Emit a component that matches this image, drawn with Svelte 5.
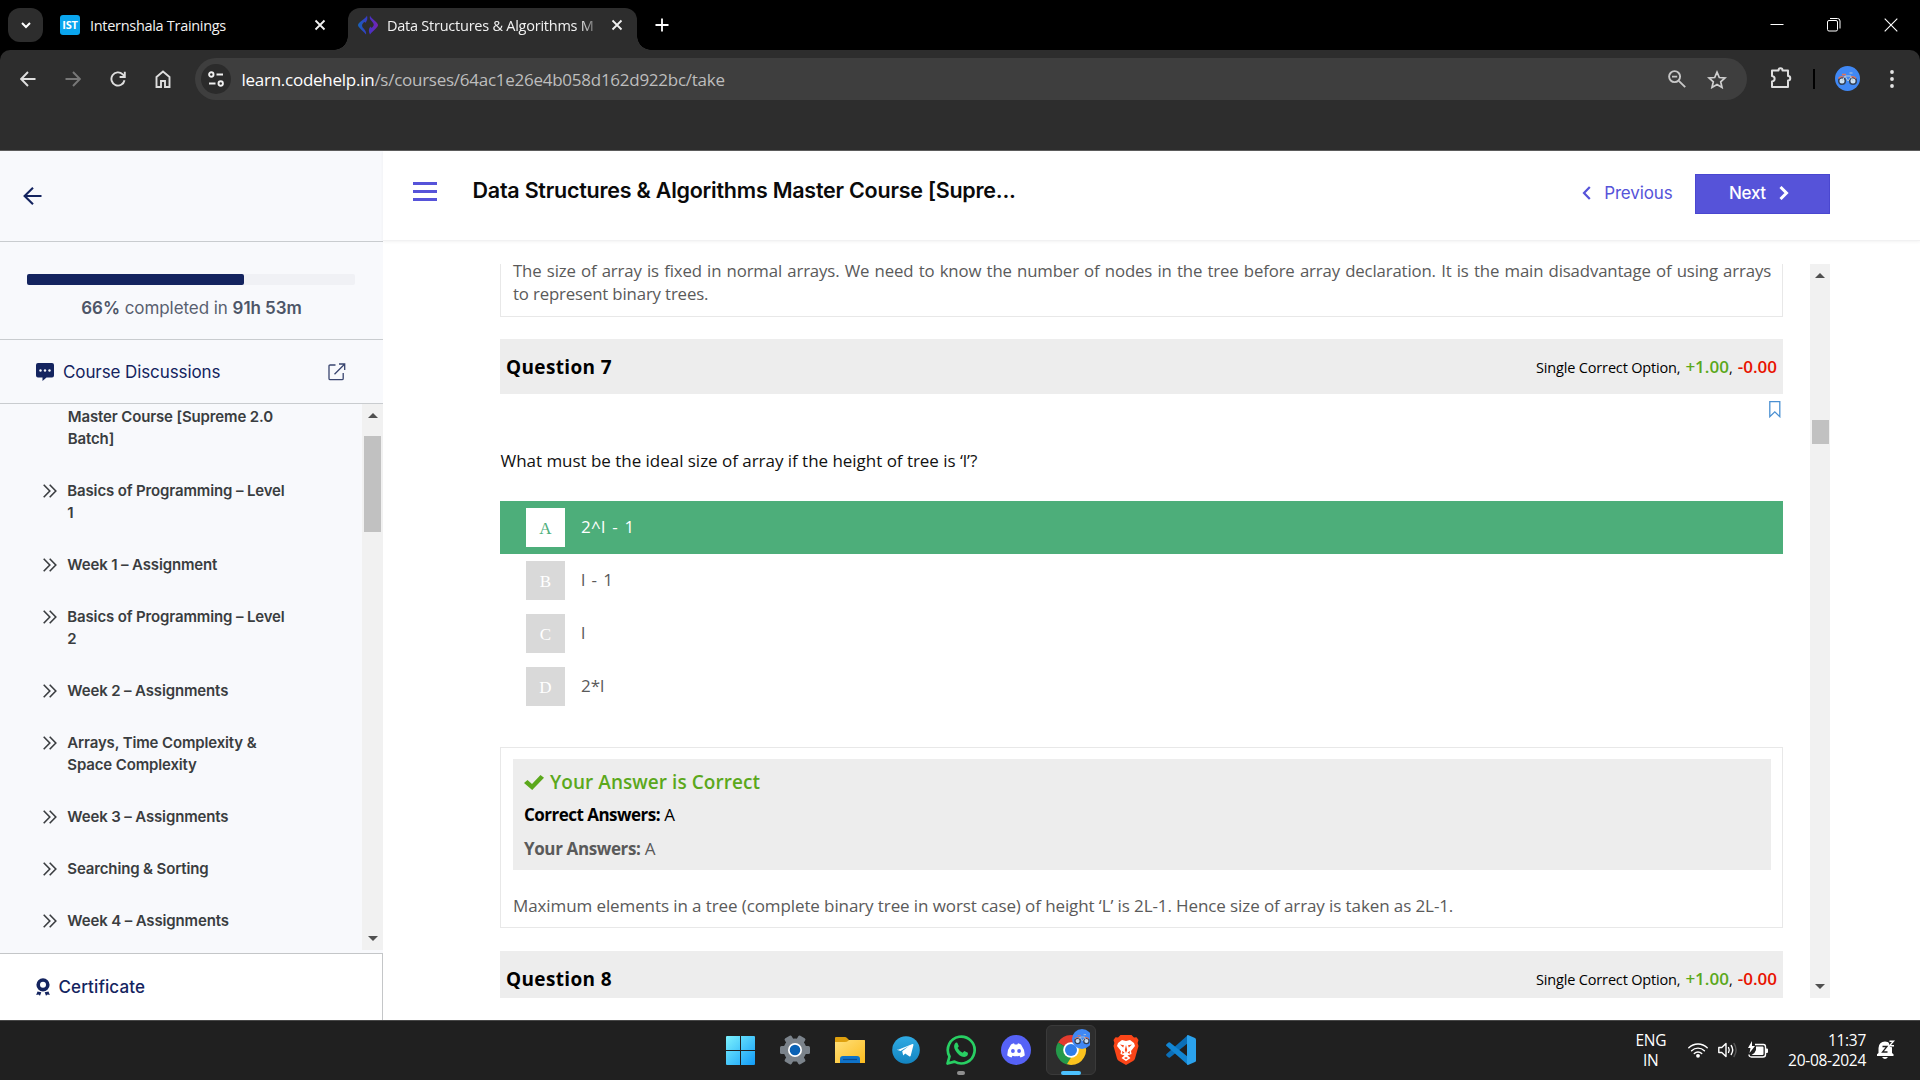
<script>
  const lessons = [
    { title: 'Basics of Programming – Level 1' },
    { title: 'Week 1 – Assignment' },
    { title: 'Basics of Programming – Level 2' },
    { title: 'Week 2 – Assignments' },
    { title: 'Arrays, Time Complexity & Space Complexity' },
    { title: 'Week 3 – Assignments' },
    { title: 'Searching & Sorting' },
    { title: 'Week 4 – Assignments' }
  ];
  const options = [
    { key: 'A', text: '2^l - 1', correct: true },
    { key: 'B', text: 'l - 1' },
    { key: 'C', text: 'l' },
    { key: 'D', text: '2*l' }
  ];
  const progress = 66;
</script>

{#snippet bike()}
  <circle cx="12.5" cy="12.5" r="12.5" fill="#4088f4" />
  <g fill="#cfe3f5" stroke="#33435c" stroke-width="1.6">
    <circle cx="7" cy="15" r="3.300" />
    <circle cx="18" cy="15" r="3.300" />
  </g>
  <path d="M7 15l3-5h6l2 5M10 10l3 5 3.300-4.500M14.500 7h3" fill="none" stroke="#b9c9d8" stroke-width="1" />
  <path d="M7 8.500h4M3.500 12.500q2-2.500 5-1.500M16 11q3-1 5 1.500" fill="none" stroke="#e2745a" stroke-width="1.300" />
{/snippet}

{#snippet questionBar(n)}
  <div class="qbar">
    <h3>Question {n}</h3>
    <p class="marks"><span class="kind">Single Correct Option,</span><b class="plus">+1.00</b><span class="comma">,</span><b class="minus">-0.00</b></p>
  </div>
{/snippet}

<div class="screen">
  <div class="tabs">
    <div class="tabsearch">
      <svg width="12" height="12" viewBox="0 0 12 12"><path d="M2 4l4 4 4-4" fill="none" stroke="#fff" stroke-width="2" /></svg>
    </div>
    <div class="tab">
      <span class="ist">IST</span>
      <span class="tabtitle first">Internshala Trainings</span>
      <svg class="x" width="12" height="12" viewBox="0 0 12 12"><path d="M1.500 1.500l9 9M10.500 1.500l-9 9" stroke="#f1f1f1" stroke-width="1.8" /></svg>
    </div>
    <div class="tab active">
      <svg width="20" height="20" viewBox="0 0 20 20">
        <defs><linearGradient id="ch" x1="0" x2="1"><stop offset="0" stop-color="#1764b8" /><stop offset="0.500" stop-color="#3a35c9" /><stop offset="1" stop-color="#7a22b5" /></linearGradient></defs>
        <path d="M9 .5C8.500 3 0 7.500 0 10s5 5.500 8 9.500c.6-2-.6-4-2.400-6C3.800 11.500 3.500 10 5 8.200 6.300 6.600 7 6.500 7.300 8 9.300 6 9.800 3 9 .5zM12 .5c.5 2.500 8 7 8 9.500s-5 5.500-8 9.500c-1.600-3-1.500-6 .5-8 .4 1.500 1.200 1.800 2.500 0 1.500-1.800.5-3.500-1-5C12 4.500 11.300 3 12 .5z" fill="url(#ch)" />
      </svg>
      <span class="tabtitle second">Data Structures &amp; Algorithms M</span>
      <svg class="x" width="12" height="12" viewBox="0 0 12 12"><path d="M1.500 1.500l9 9M10.500 1.500l-9 9" stroke="#f1f1f1" stroke-width="1.8" /></svg>
    </div>
    <svg class="plusicon" width="14" height="14" viewBox="0 0 14 14"><path d="M7 .5v13M.5 7h13" stroke="#fff" stroke-width="1.800" /></svg>
    <div class="winctl">
      <svg width="14" height="14" viewBox="0 0 14 14"><path d="M.5 6.500h13" stroke="#fff" /></svg>
      <svg width="14" height="14" viewBox="0 0 14 14"><g fill="none" stroke="#fff"><rect x=".5" y="2.500" width="10" height="10.500" rx="1.500" /><path d="M3 .5h7.500a2.500 2.500 0 0 1 2.500 2.500v7.500" /></g></svg>
      <svg width="14" height="14" viewBox="0 0 14 14"><path d="M.7.7l12.600 12.600M13.300.7L.7 13.300" stroke="#fff" stroke-width="1.100" /></svg>
    </div>
  </div>

  <div class="toolbarback">
    <div class="toolbar">
      <div class="nav">
        <svg width="16" height="16" viewBox="0 0 16 16"><path d="M15.500 8H1.500M8 1L1.200 8 8 15" fill="none" stroke="#dedede" stroke-width="1.900" /></svg>
        <svg width="16" height="16" viewBox="0 0 16 16"><path d="M.5 8h14M8 1l6.800 7L8 15" fill="none" stroke="#777" stroke-width="1.900" /></svg>
        <svg width="16" height="16" viewBox="0 0 16 16"><path d="M14.500 9.200A6.600 6.600 0 1 1 12.700 3.300L14.800 5.400M14.800.8v5.200H9.600" fill="none" stroke="#dedede" stroke-width="1.900" /></svg>
        <svg width="16" height="18" viewBox="0 0 16 18"><path d="M1.500 7L8 1.500 14.500 7v10H10v-6H6v6H1.500z" fill="none" stroke="#dedede" stroke-width="1.900" /></svg>
      </div>
      <div class="address">
        <span class="site"><svg width="16" height="16" viewBox="0 0 16 16"><g fill="none" stroke="#f0f0f0" stroke-width="1.900"><circle cx="3.300" cy="3.500" r="2.200" /><path d="M8.500 3.500H15M1 12.500h6.500" /><circle cx="12.700" cy="12.500" r="2.200" /></g></svg></span>
        <span class="url"><b>learn.codehelp.in</b>/s/courses/64ac1e26e4b058d162d922bc/take</span>
        <svg class="zoomicon" width="18" height="18" viewBox="0 0 18 18"><g fill="none" stroke="#c7c7c7" stroke-width="1.900"><circle cx="6.600" cy="6.600" r="5.500" /><path d="M4 6.600h5.200M10.800 10.800l6.400 6.400" /></g></svg>
        <svg width="20" height="19" viewBox="0 0 20 19"><path d="M10 2.200l2.300 5.300 5.700.5-4.300 3.800 1.300 5.600-5-3-5 3 1.300-5.600L2 8l5.700-.5z" fill="none" stroke="#d0d0d0" stroke-width="1.700" /></svg>
      </div>
      <svg class="ext" width="22" height="22" viewBox="0 0 22 22"><path d="M2 3.500h6.500c0-3 4-3 4 0H18V9c3 0 3 4.500 0 4.500V20H2v-5.500c3.500-.5 3.500-5 0-5.500z" fill="none" stroke="#dedede" stroke-width="2" stroke-linejoin="round" /></svg>
      <i class="sep"></i>
      <svg class="avatar" width="25" height="25" viewBox="0 0 25 25">{@render bike()}</svg>
      <svg class="dots" width="4" height="20" viewBox="0 0 4 20"><g fill="#e3e3e3"><circle cx="2" cy="3" r="1.900" /><circle cx="2" cy="10" r="1.900" /><circle cx="2" cy="17" r="1.900" /></g></svg>
    </div>
  </div>

  <div class="page">
    <aside>
      <div class="backrow">
        <svg width="19" height="18" viewBox="0 0 19 18"><path d="M18.500 9H1.500M10 .8L1.600 9l8.400 8.200" fill="none" stroke="#14245f" stroke-width="2.100" /></svg>
      </div>
      <div class="progress">
        <div class="track"><div class="fill" style="width:{progress + 0.2}%"></div></div>
        <p><b>{progress}%</b> completed in <b>91h 53m</b></p>
      </div>
      <div class="discuss">
        <svg width="18" height="18" viewBox="0 0 18 18"><path d="M2 0h14a2 2 0 0 1 2 2v10.500a2 2 0 0 1-2 2h-5.500L6.500 18v-3.500H2a2 2 0 0 1-2-2V2a2 2 0 0 1 2-2z" fill="#14245f" /><g fill="#f8f9fc"><circle cx="4.500" cy="7.500" r="1.200" /><circle cx="9" cy="7.500" r="1.200" /><circle cx="13.500" cy="7.500" r="1.200" /></g></svg>
        <span>Course Discussions</span>
        <svg width="18" height="18" viewBox="0 0 18 18"><path d="M7.500 2H2.200Q1 2 1 3.200v12.300q0 1.200 1.200 1.200H14q1.200 0 1.200-1.200V10M11 1h5.700v6M16.500 1.200l-10 10" fill="none" stroke="#39456f" stroke-width="1.300" /></svg>
      </div>
      <div class="listwrap">
        <div class="list">
          <div class="lesson"><i></i><span>Master Course [Supreme 2.0 Batch]</span></div>
          {#each lessons as l}
            <div class="lesson">
              <svg width="14" height="14" viewBox="0 0 14 14"><path d="M.7.8L6.800 7 .7 13.200M6.700.8L12.800 7l-6.100 6.200" fill="none" stroke="#3a3d40" stroke-width="1.600" /></svg>
              <span>{l.title}</span>
            </div>
          {/each}
        </div>
        <div class="bar small">
          <i class="up"></i><i class="thumb"></i><i class="down"></i>
        </div>
      </div>
      <div class="cert">
        <svg width="14" height="18" viewBox="0 0 14 18"><circle cx="7" cy="6.800" r="4.800" fill="none" stroke="#14245f" stroke-width="3.600" /><path d="M1.500 13.500l3.800.8-1.300 3.500-1.600-1.200-2.200.4zM12.500 13.500l-3.800.8 1.300 3.500 1.600-1.200 2.200.4z" fill="#14245f" /></svg>
        <span>Certificate</span>
      </div>
    </aside>

    <main>
      <header>
        <svg width="24" height="19" viewBox="0 0 24 19"><path d="M0 1.500h24M0 9.500h24M0 17.500h24" stroke="#5653d9" stroke-width="2.800" /></svg>
        <h1>Data Structures &amp; Algorithms Master Course [Supre...</h1>
        <span class="prev"><svg width="9" height="14" viewBox="0 0 9 14"><path d="M7.800 1L2 7l5.800 6" fill="none" stroke="#5653d9" stroke-width="2.200" /></svg>Previous</span>
        <span class="next">Next<svg width="10" height="14" viewBox="0 0 10 14"><path d="M1.500 1l6 6-6 6" fill="none" stroke="#fff" stroke-width="3" /></svg></span>
      </header>
      <div class="pane">
        <div class="content">
          <div class="prevbox"><span class="full">The size of array is fixed in normal arrays. We need to know the number of nodes in the tree before array declaration. It is the main disadvantage of using arrays</span> <span class="rest">to represent binary trees.</span></div>
          {@render questionBar(7)}
          <div class="mark"><svg width="12" height="17" viewBox="0 0 12 17"><path d="M.8.7h10v15l-5-4.800-5 4.800z" fill="none" stroke="#4a90d2" stroke-width="1.300" /></svg></div>
          <p class="question">What must be the ideal size of array if the height of tree is ‘l’?</p>
          {#each options as o}
            <div class="option" class:correct={o.correct}>
              <span class="key">{o.key}</span><span class="opt">{o.text}</span>
            </div>
          {/each}
          <div class="answer">
            <div class="verdict">
              <div class="ok"><svg width="20" height="15" viewBox="0 0 20 15"><path d="M0 8l3.500-3L8 9 16.500 0 20 2.800 8.200 15z" fill="#5ba81c" /></svg><span>Your Answer is Correct</span></div>
              <div class="line dark"><b>Correct Answers:</b> A</div>
              <div class="line"><b>Your Answers:</b> A</div>
            </div>
            <p>Maximum elements in a tree (complete binary tree in worst case) of height ‘L’ is 2L-1. Hence size of array is taken as 2L-1.</p>
          </div>
          {@render questionBar(8)}
        </div>
        <div class="bar large">
          <i class="up"></i><i class="thumb"></i><i class="down"></i>
        </div>
      </div>
    </main>
  </div>

  <footer>
    <div class="apps">
      <span><svg width="29" height="29" viewBox="0 0 29 29"><defs><linearGradient id="wn" x1="0" y1="0" x2="1" y2="1"><stop offset="0" stop-color="#7cf2fd" /><stop offset="1" stop-color="#129cf8" /></linearGradient></defs><path d="M1 0h13v14H0V1q0-1 1-1zM15 0h13q1 0 1 1v13H15zM0 15h14v14H1q-1 0-1-1zM15 15h14v13q0 1-1 1H15z" fill="url(#wn)" /></svg></span>
      <span><svg width="30" height="30" viewBox="0 0 30 30"><circle cx="15" cy="15" r="11.500" fill="#7b838b" /><g fill="#7b838b"><rect x="0" y="11" width="30" height="8" rx="1.500" /><rect x="0" y="11" width="30" height="8" rx="1.500" transform="rotate(60 15 15)" /><rect x="0" y="11" width="30" height="8" rx="1.500" transform="rotate(120 15 15)" /></g><circle cx="15" cy="15" r="7" fill="#fff" /><circle cx="15" cy="15" r="5.300" fill="#0a62b5" /></svg></span>
      <span><svg width="30" height="28" viewBox="0 0 30 28"><defs><linearGradient id="fo" x1="0" y1="0" x2="1" y2="1"><stop offset="0" stop-color="#ffe07a" /><stop offset="1" stop-color="#fcbb1e" /></linearGradient></defs><path d="M0 8V2q0-1 1-1h9q1 0 2 1l2 2h15q1 0 1 1v5z" fill="#dfa00e" /><path d="M0 6h10q2 0 3-1l1-1h15q1 0 1 1v22H0z" fill="url(#fo)" /><path d="M5 27v-4q0-3 3-3h14q3 0 3 3v4z" fill="#0f73c9" /><path d="M8 23.500h14" stroke="#0a4a8f" stroke-width="1.200" /></svg></span>
      <span><svg width="28" height="28" viewBox="0 0 28 28"><defs><linearGradient id="tg" x1="0" y1="0" x2="0" y2="1"><stop offset="0" stop-color="#2fabe4" /><stop offset="1" stop-color="#1384c0" /></linearGradient></defs><circle cx="14" cy="14" r="13.800" fill="url(#tg)" /><path d="M5.500 14L20.500 8q1.200-.3.900 1.200l-2.700 10.600q-.4 1.200-1.500.5l-4-2.900-2 2-1-4.200 7-5.400-8.700 5.300-3-1q-.9-.4 0-1z" fill="#fff" /></svg></span>
      <span class="running"><svg width="30" height="30" viewBox="0 0 30 30"><path d="M1.500 28.500l2-7A13.400 13.400 0 1 1 8.500 26.600z" fill="none" stroke="#28cf63" stroke-width="2.700" stroke-linejoin="round" /><path d="M9 8.500q1-1.300 2.300-.8l1.500 3.600-1.200 1.800q1.700 3.300 5 4.700l1.700-1.700 3.600 1.700q.5 3.700-3.700 4.200Q13 21.500 9.400 15.500q-2.400-4-.4-7z" fill="#28cf63" /></svg></span>
      <span><svg width="30" height="30" viewBox="0 0 30 30"><circle cx="15" cy="15" r="15" fill="#5662f6" /><path d="M10 9.500q1.500-1 3-1.200l.7 1.200h2.600l.7-1.200q1.500.2 3 1.200 4 5.500 3.700 11-2 1.500-4.200 2l-1-1.800q-3.500 1-7 0l-1 1.800q-2.200-.5-4.200-2Q6 15 10 9.500z" fill="#fff" /><circle cx="11.900" cy="16" r="1.900" fill="#5662f6" /><circle cx="18.100" cy="16" r="1.900" fill="#5662f6" /></svg></span>
      <span class="current"><svg width="38" height="38" viewBox="-4 -8 38 38">
        <path d="M15 15L2 7.500A15 15 0 0 1 28 7.500z" fill="#e33b2e" /><path d="M15 15L28 7.500A15 15 0 0 1 15 30z" fill="#fcc31e" /><path d="M15 15v15A15 15 0 0 1 2 7.500z" fill="#24994a" /><path d="M21.500 18.500L15 30l-4-1 5-8z" fill="#fcc31e" /><circle cx="15" cy="15" r="7.800" fill="#fff" /><circle cx="15" cy="15" r="6" fill="#2f7de9" />
        <g transform="translate(16 -6) scale(.8)">{@render bike()}</g></svg></span>
      <span><svg width="26" height="30" viewBox="0 0 26 30"><path d="M7.500 0h11l2.500 2.500 2.500-.3L25.500 5l-.9 3L25.500 11 22 23.500q-.5 1.500-2 2.500L13 30l-7-4q-1.500-1-2-2.500L.5 11l.9-3-.9-3 2-2.800 2.500.3z" fill="#fb4518" /><path d="M9 5l4 1 4-1 4 3 1 3-4 5 .5 3-4 1.500 3 2.500-4.500 3-4.500-3 3-2.500-4-1.500.5-3-4-5 1-3z" fill="#fff" /><path d="M7 9.500l4 .8-.8 2.200zM19 9.500l-4 .8.800 2.200zM13 10l-1.200 5 1.200 3 1.200-3zM9 16l2.500 1.500L9.500 19zM17 16l-2.500 1.500 2 1.500zM11 23l2-1 2 1-2 1.200z" fill="#fb4518" /></svg></span>
      <span><svg width="30" height="30" viewBox="0 0 30 30"><path d="M22 0v8L4 22.500q-1 .6-1.800-.2l-1.700-1.600q-.8-.9 0-1.800z" fill="#0b6fb8" /><path d="M22 30v-8L4 7.500q-1-.6-1.800.2L.5 9.300q-.8.9 0 1.800z" fill="#1286d4" /><path d="M22 0l7 3q1 .5 1 1.600v20.800q0 1.100-1 1.600l-7 3q-1 0-1-1V1q0-1 1-1z" fill="#2ba2ec" /></svg></span>
    </div>
    <div class="tray">
      <div class="lang"><span>ENG</span><span>IN</span></div>
      <svg class="wifi" width="20" height="16" viewBox="0 0 20 16"><g fill="none" stroke="#fff" stroke-width="1.400" stroke-linecap="round"><path d="M.8 5.800a13 13 0 0 1 18.400 0M3.600 8.800a9 9 0 0 1 12.800 0M6.300 11.600a5.200 5.200 0 0 1 7.400 0" /></g><circle cx="10" cy="13.800" r="1.900" fill="#fff" /></svg>
      <svg class="vol" width="20" height="16" viewBox="0 0 20 16"><g fill="none" stroke="#fff" stroke-width="1.400" stroke-linejoin="round" stroke-linecap="round"><path d="M.8 5.500h3L8 1.500v13l-4.200-4h-3zM10.500 5.500q1.500 2.500 0 5M13.200 3.500q3 4.500 0 9" /><path d="M16 1.500q4.200 6.500 0 13" stroke="#555" /></g></svg>
      <svg class="bat" width="20" height="18" viewBox="0 0 20 18"><path d="M7 3.500h8.500Q17.500 3.500 17.500 6v7.500q0 2.500-2.500 2.500H3.500Q1 16 1 13.500" fill="none" stroke="#fff" stroke-width="1.400" /><path d="M18 7.500h1q1 0 1 1v2.500q0 1-1 1h-1zM8 5.500h6.500q1 0 1 1V13q0 1-1 1h-11q3.500-1.500 4.500-5z" fill="#fff" /><path d="M4 0L0 7h2.500L1.500 12 7 5H4z" fill="#fff" /></svg>
      <div class="clock"><span>11:37</span><span>20-08-2024</span></div>
      <svg class="bell" width="18" height="20" viewBox="0 0 18 20"><path d="M1.500 13V8Q2 1.500 8 1.500T15 8v5l1.500 1.200v1.800H0v-1.800zM5 17h6q-3 4-6 0z" fill="#fff" /><path d="M5.500 6.500h4.500l-4.500 5.500h5" fill="none" stroke="#202020" stroke-width="1.300" /><path d="M11 0h7v7h-5z" fill="#202020" /><path d="M12.500 1.200h4l-4 4.500h4.500" fill="none" stroke="#fff" stroke-width="1.400" /></svg>
    </div>
  </footer>
</div>

<style>
  :global(body) { margin: 0; overflow: hidden; }
  .screen { width: 1920px; height: 1080px; display: flex; flex-direction: column; font-family: "Open Sans", "Noto Sans", sans-serif; background: #fff; }
  svg { display: block; flex: none; }
  h1, h3, p { margin: 0; }
  i { display: block; }

  .tabs { height: 50px; background: #000; display: flex; align-items: center; flex: none; }
  .tabsearch { width: 35px; height: 34px; margin-left: 8px; border-radius: 12px; background: #2d2d2d; display: grid; place-items: center; }
  .tab { display: flex; align-items: center; height: 42px; margin-top: 8px; padding-bottom: 8px; box-sizing: border-box; width: 274px; margin-left: 17px; }
  .ist { width: 20px; height: 20px; border-radius: 3px; background: #0aa5ee; color: #fff; font: 700 11px/20px "Open Sans", sans-serif; letter-spacing: -0.2px; text-align: center; }
  .tabtitle { color: #f2f2f2; font-size: 14.500px; line-height: 20px; white-space: nowrap; margin-left: 10px; padding-top: 1px; letter-spacing: -0.300px; }
  .second { width: 210px; margin-left: 9px; letter-spacing: -0.240px; -webkit-mask-image: linear-gradient(90deg, #000 92%, transparent 102%); mask-image: linear-gradient(90deg, #000 92%, transparent 102%); }
  .x { margin-left: auto; }
  .active { position: relative; width: 289px; margin-left: 14px; padding-left: 10px; padding-right: 14px; background: #2d2d2d; border-radius: 12px 12px 0 0; }
  .active::before, .active::after { content: ""; position: absolute; bottom: 0; width: 14px; height: 14px; }
  .active::before { left: -14px; background: radial-gradient(circle at 0 0, #000 13.500px, #2d2d2d 14px); }
  .active::after { right: -14px; background: radial-gradient(circle at 100% 0, #000 13.500px, #2d2d2d 14px); }
  .tab:not(.active) .x { margin-right: 8px; margin-left: 6px; }
  .first { flex: 1; }
  .plusicon { margin-left: 18px; }
  .winctl { margin-left: auto; display: flex; gap: 43px; margin-right: 22px; }

  .toolbarback { background: #000; flex: none; }
  .toolbar { height: 101px; box-sizing: border-box; background: #2d2d2d; border-radius: 10px 10px 0 0; border-bottom: 1px solid #5c5c5c; display: flex; align-items: flex-start; padding-top: 8px; }
  .nav { display: flex; align-items: center; gap: 29px; margin-left: 20px; height: 42px; }
  .address { width: 1552px; height: 42px; box-sizing: border-box; margin-left: 24px; border-radius: 21px; background: #3e3e3e; display: flex; align-items: center; padding: 0 20px 0 6px; }
  .site { width: 30px; height: 30px; border-radius: 50%; background: #2b2b2b; display: grid; place-items: center; }
  .url { margin-left: 10.500px; padding-top: 1px; font-size: 17px; color: #bdbdbd; letter-spacing: -0.260px; line-height: 22px; }
  .url b { font-weight: 400; color: #fff; }
  .zoomicon { margin-left: auto; margin-right: 21px; }
  .ext { margin: 9px 0 0 23px; }
  .sep { width: 2px; height: 20px; margin: 11px 0 0 21px; background: #000; }
  .avatar { margin: 8px 0 0 20px; }
  .dots { margin: 11px 0 0 30px; }

  .page { display: flex; height: 869px; flex: none; background: #fff; }
  aside { width: 383px; display: flex; flex-direction: column; background: #f8f9fc; font-family: Inter, sans-serif; flex: none; }
  .backrow { height: 90px; border-bottom: 1px solid #c9cccf; display: flex; align-items: center; padding-left: 22.500px; }
  .progress { height: 97px; border-bottom: 1px solid #c9cccf; box-sizing: content-box; }
  .track { width: 328px; height: 11px; margin: 32px 0 0 27px; border-radius: 2px; background: #f0f1f5; }
  .fill { height: 11px; border-radius: 2px; background: #14245f; }
  .progress p { margin-top: 12px; text-align: center; font-size: 17px; line-height: 22px; color: #58606f; letter-spacing: -0.060px; }
  .progress b { font-weight: 600; color: #4d5567; }
  .discuss { height: 63px; border-bottom: 1px solid #c9cccf; display: flex; align-items: center; padding: 0 37px 0 36px; color: #14245f; font-size: 17px; letter-spacing: -0.100px; }
  .discuss span { flex: 1; margin-left: 9px; }
  .listwrap { height: 546px; display: flex; overflow: hidden; margin-bottom: 3px; }
  .list { width: 362px; padding-top: 2px; }
  .lesson { display: flex; padding-bottom: 30px; color: #3a3d40; font-size: 15px; line-height: 22px; font-weight: 600; letter-spacing: -0.140px; }
  .lesson i { width: 14px; margin-left: 43px; }
  .lesson svg { margin: 4px 0 0 42.500px; }
  .lesson span { width: 221px; margin-left: 10.800px; }
  .bar { background: #f1f1f1; display: flex; flex-direction: column; align-items: center; }
  .small { width: 21px; }
  .large { width: 20px; }
  .up { border: 5px solid transparent; border-top: 0; border-bottom-color: #505050; margin-top: 9px; }
  .down { border: 5px solid transparent; border-bottom: 0; border-top-color: #505050; margin-top: auto; margin-bottom: 9px; }
  .thumb { width: 17px; background: #c1c1c1; }
  .small .thumb { height: 96px; margin-top: 18px; }
  .large .thumb { height: 24px; margin-top: 142px; }
  .cert { flex: 1; box-sizing: border-box; background: #fff; border-top: 1px solid #c4c6c8; border-right: 1px solid #c4c6c8; display: flex; align-items: center; padding-left: 36px; color: #14245f; font-size: 17px; font-weight: 500; letter-spacing: 0.100px; }
  .cert span { margin-left: 8.500px; }

  main { flex: 1; }
  header { height: 90px; display: flex; align-items: flex-start; box-sizing: border-box; border-bottom: 1px solid #f1f1f2; box-shadow: 0 1px 3px rgba(0, 0, 0, 0.05); font-family: Inter, sans-serif; }
  header > svg { margin: 31px 0 0 30px; }
  h1 { margin: 25px 0 0 35.500px; font-size: 21.500px; line-height: 28px; font-weight: 600; letter-spacing: -0.240px; color: #0a0a0a; }
  .prev { margin: 31px 0 0 auto; display: flex; align-items: center; line-height: 22px; font-size: 17px; color: #5653d9; letter-spacing: -0.140px; }
  .prev svg { margin-right: 13.500px; }
  .next { width: 135px; height: 40px; box-sizing: border-box; margin: 23px 90px 0 22.500px; background: #5653d9; border: 1px solid #4a47d0; display: flex; align-items: center; padding: 0 0 2px 33px; color: #fff; font-size: 17px; font-weight: 500; letter-spacing: -0.300px; }
  .next svg { margin-left: 13px; }

  .pane { height: 734px; margin-top: 23px; display: flex; overflow: hidden; }
  .content { width: 1283px; margin: 0 27px 0 117px; height: 734px; overflow: hidden; }
  .prevbox { height: 58px; box-sizing: border-box; border: 1px solid #e8e8e8; border-top: 0; margin: -5px 0 22px; padding: 0 11px 0 12px; font-size: 16.800px; line-height: 23px; color: #5a5a5a; letter-spacing: -0.150px; }
  .full { display: block; text-align: justify; text-align-last: justify; white-space: normal; }
  .rest { display: block; }
  .qbar { height: 55px; background: #ededed; display: flex; align-items: center; justify-content: space-between; padding: 0 6px; color: #000; }
  h3 { font-size: 19px; font-weight: 700; letter-spacing: 0.350px; }
  .marks { display: flex; align-items: baseline; font-size: 14.500px; }
  .kind { letter-spacing: -0.170px; }
  .plus, .minus { font-size: 17px; font-weight: 600; letter-spacing: 0; }
  .plus { color: #5ba81c; margin-left: 5px; }
  .minus { color: #e81300; margin-left: 5px; }
  .mark { height: 16px; display: flex; justify-content: flex-end; padding: 7px 2.500px 0 0; }
  .question { margin: 32px 0 28px; padding-left: 0.500px; font-size: 17px; line-height: 24px; color: #111; letter-spacing: -0.030px; }
  .option { height: 53px; display: flex; align-items: center; padding-left: 26px; color: #5a5a5a; }
  .key { width: 39px; height: 39px; background: #d9d9d9; color: #fff; display: grid; place-items: center; font-family: "Liberation Serif", serif; font-size: 17px; line-height: 41px; }
  .opt { margin-left: 16px; font-size: 17px; padding-bottom: 2px; word-spacing: 1.800px; }
  .correct { background: #4dae7a; color: #fff; }
  .correct .key { background: #fff; color: #4dae7a; }
  .correct .opt { letter-spacing: 0.300px; }
  .answer { height: 181px; box-sizing: border-box; margin: 34px 0 23px; border: 1px solid #e8e8e8; padding: 11px 11px 0 12px; }
  .verdict { height: 111px; box-sizing: border-box; background: #ededed; padding: 9px 11px 0; }
  .ok { display: flex; align-items: center; color: #5ba81c; font-size: 19px; line-height: 28px; font-weight: 600; letter-spacing: 0.050px; }
  .ok span { margin-left: 6px; }
  .line { font-size: 17px; line-height: 34px; color: #5a5a5a; letter-spacing: -0.200px; }
  .line b { font-weight: 700; letter-spacing: -0.380px; }
  .dark { color: #000; margin-top: 2px; }
  .dark b { letter-spacing: -0.520px; }
  .answer p { margin-top: 24px; font-size: 17px; line-height: 24px; color: #5a5a5a; letter-spacing: -0.100px; }

  footer { height: 60px; box-sizing: border-box; background: #202020; border-top: 1px solid #474747; display: flex; color: #fff; flex: none; }
  .apps { display: grid; grid-template-columns: repeat(9, 55.100px); margin-left: 712.700px; height: 58px; }
  .apps span { display: flex; align-items: center; justify-content: center; position: relative; }
  .running::after, .current::after { content: ""; position: absolute; bottom: 4px; height: 4px; border-radius: 2px; background: #8f8f8f; width: 8px; }
  .current::after { width: 20px; background: #4cc2ff; }
  .current::before { content: ""; position: absolute; width: 48px; height: 48px; border: 1px solid #3a3a3a; border-radius: 6px; background: #2d2d2d; }
  .current svg { position: relative; margin-bottom: 8px; }
  .tray { margin-left: auto; display: flex; align-items: center; padding-right: 25px; height: 58px; }
  .lang, .clock { display: flex; flex-direction: column; font-size: 15.500px; line-height: 20px; letter-spacing: -0.300px; margin-bottom: 1px; }
  .lang { align-items: center; margin-right: 22px; }
  .clock { align-items: flex-end; margin-left: 20px; margin-right: 11px; }
  .vol { margin-left: 10px; }
  .bat { margin-left: 10px; }
</style>
